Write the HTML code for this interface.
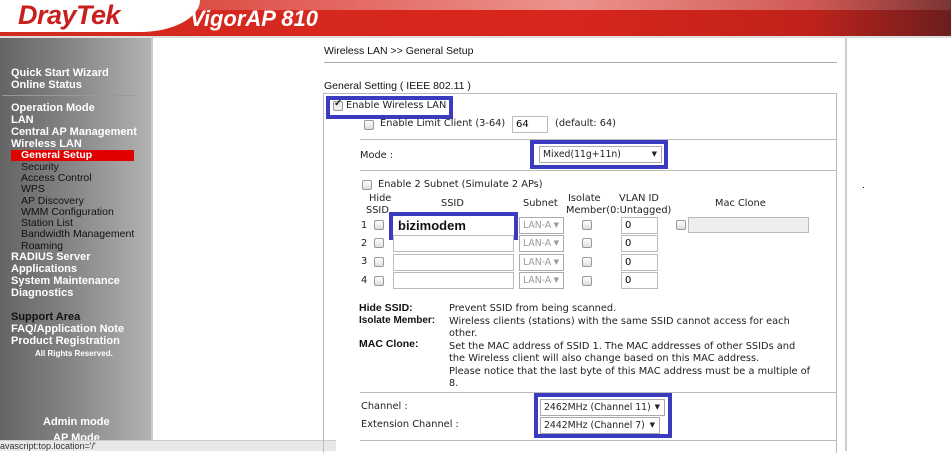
<!DOCTYPE html>
<html><head><style>
*{margin:0;padding:0;box-sizing:border-box}
body{width:951px;height:451px;overflow:hidden;background:#fff;font-family:"Liberation Sans",Arial,sans-serif;position:relative}
.a{position:absolute;white-space:nowrap}
.v{font-family:"DejaVu Sans",Verdana,sans-serif;font-size:9.8px;color:#222}
.m{color:#fff;font-weight:bold;font-size:11px;left:11px}
.s{color:#111;font-size:10.5px;left:21px}
.cb{position:absolute;width:10px;height:10px;border:1px solid #999;border-radius:2px;background:linear-gradient(#fff,#ddd)}
.in{position:absolute;border:1px solid #bbb;background:#fff;height:17px;font-size:10px;padding-left:3px;line-height:15px;font-family:"DejaVu Sans",sans-serif}
.sel{position:absolute;border:1px solid #aaa;background:#fff;height:17px;font-size:9.3px;padding-left:3px;line-height:15px;font-family:"DejaVu Sans",sans-serif;color:#222;overflow:hidden}
.sel:after{content:"▼";position:absolute;right:4px;font-size:7px;top:0;background:#fff}
.blue{position:absolute;border:4px solid #3b3bbf}
.hr{position:absolute;height:1px;background:#bbb}
</style></head><body>
<div class="a" style="left:0;top:0;width:951px;height:36px;background:linear-gradient(90deg,#d42a20 0%,#d8261c 60%,#c0221b 85%,#6b1e1e 100%)"></div>
<div class="a" style="left:0;top:0;width:951px;height:10px;background:linear-gradient(90deg,rgba(255,255,255,0) 0%,rgba(255,255,255,.5) 60%,rgba(255,255,255,.1) 100%)"></div>
<div class="a" style="left:0;top:0;width:200px;height:32px;background:#fff;border-bottom-right-radius:60px 32px"></div>
<div class="a" style="left:18px;top:2px;font-size:27px;line-height:27px;font-weight:bold;font-style:italic;color:#c8201c;letter-spacing:-0.5px">DrayTek</div>
<div class="a" style="left:190px;top:6px;font-size:22px;font-weight:bold;font-style:italic;color:#fff">VigorAP 810</div>
<div class="a" style="left:0;top:36px;width:951px;height:2px;background:#ddd"></div>
<div class="a" style="left:0;top:38px;width:151px;height:413px;background:linear-gradient(90deg,#646464 0%,#888 50%,#b2b2b2 100%)"></div>
<div class="a" style="left:151px;top:38px;width:2px;height:413px;background:#ccc"></div>
<div class="a m" style="top:67px">Quick Start Wizard</div>
<div class="a m" style="top:79px">Online Status</div>
<div class="a" style="left:2px;top:95px;width:132px;height:1px;background:#999"></div>
<div class="a m" style="top:102px">Operation Mode</div>
<div class="a m" style="top:114px">LAN</div>
<div class="a m" style="top:126px">Central AP Management</div>
<div class="a m" style="top:138px">Wireless LAN</div>
<div class="a" style="left:11px;top:150px;width:123px;height:11px;background:#e00000"></div>
<div class="a" style="left:21px;top:149px;font-size:10.5px;color:#fff;font-weight:bold">General Setup</div>
<div class="a s" style="top:161px">Security</div>
<div class="a s" style="top:172px">Access Control</div>
<div class="a s" style="top:183px">WPS</div>
<div class="a s" style="top:195px">AP Discovery</div>
<div class="a s" style="top:206px">WMM Configuration</div>
<div class="a s" style="top:217px">Station List</div>
<div class="a s" style="top:228px">Bandwidth Management</div>
<div class="a s" style="top:240px">Roaming</div>
<div class="a m" style="top:251px">RADIUS Server</div>
<div class="a m" style="top:263px">Applications</div>
<div class="a m" style="top:275px">System Maintenance</div>
<div class="a m" style="top:287px">Diagnostics</div>
<div class="a" style="left:11px;top:311px;font-size:11px;font-weight:bold;color:#111">Support Area</div>
<div class="a m" style="top:323px">FAQ/Application Note</div>
<div class="a m" style="top:335px">Product Registration</div>
<div class="a" style="left:35px;top:349px;font-size:8px;color:#fff;font-weight:bold">All Rights Reserved.</div>
<div class="a" style="left:43px;top:416px;font-size:11px;color:#fff;font-weight:bold">Admin mode</div>
<div class="a" style="left:53px;top:432px;font-size:11px;color:#fff;font-weight:bold">AP Mode</div>
<div class="a" style="left:0;top:440px;width:336px;height:11px;background:#e8e8e8;border-top:1px solid #ccc;font-size:9px;color:#333;line-height:10px">avascript:top.location='/'</div>
<div class="a" style="left:845px;top:38px;width:2px;height:413px;background:#ccc"></div>
<div class="a" style="left:862px;top:180px;font-size:10px">.</div>
<div class="a" style="left:324px;top:45px;font-size:10.5px;color:#111">Wireless LAN &gt;&gt; General Setup</div>
<div class="hr" style="left:324px;top:62px;width:513px;background:#aaa"></div>
<div class="a" style="left:324px;top:80px;font-size:10.5px;color:#111">General Setting ( IEEE 802.11 )</div>
<div class="a" style="left:323px;top:93px;width:514px;height:360px;border:1px solid #bbb;border-bottom:none"></div>
<div class="blue" style="left:326px;top:96px;width:127px;height:23px"></div>
<div class="cb" style="left:333px;top:101px;background:#eee"></div>
<div class="a" style="left:334px;top:98px;font-size:10px;color:#222;font-weight:bold">✓</div>
<div class="a v" style="left:346px;top:100px">Enable Wireless LAN</div>
<div class="cb" style="left:364px;top:120px"></div>
<div class="a v" style="left:380px;top:118px">Enable Limit Client (3-64)</div>
<div class="in" style="left:512px;top:116px;width:36px">64</div>
<div class="a v" style="left:555px;top:118px">(default: 64)</div>
<div class="hr" style="left:360px;top:139px;width:477px"></div>
<div class="a v" style="left:360px;top:150px">Mode :</div>
<div class="blue" style="left:530px;top:140px;width:138px;height:29px"></div>
<div class="sel" style="left:539px;top:146px;width:123px">Mixed(11g+11n)</div>
<div class="hr" style="left:360px;top:170px;width:477px"></div>
<div class="cb" style="left:362px;top:180px"></div>
<div class="a v" style="left:378px;top:179px">Enable 2 Subnet (Simulate 2 APs)</div>
<div class="a v" style="left:369px;top:193px">Hide</div>
<div class="a v" style="left:366px;top:205px">SSID</div>
<div class="a v" style="left:441px;top:198px">SSID</div>
<div class="a v" style="left:523px;top:198px">Subnet</div>
<div class="a v" style="left:568px;top:193px">Isolate</div>
<div class="a v" style="left:566px;top:205px">Member(0:Untagged)</div>
<div class="a v" style="left:619px;top:193px">VLAN ID</div>
<div class="a v" style="left:715px;top:198px">Mac Clone</div>
<div class="blue" style="left:389px;top:212px;width:129px;height:28px"></div>
<div class="a" style="left:398px;top:218px;font-size:13px;font-weight:bold;color:#111">bizimodem</div>
<div class="cb" style="left:676px;top:220px"></div>
<div class="a" style="left:688px;top:217px;width:121px;height:16px;border:1px solid #bbb;background:#eee"></div>
<div class="a v" style="left:361px;top:220px">1</div>
<div class="cb" style="left:374px;top:220px"></div>
<div class="sel" style="left:519px;top:217px;width:45px;color:#999">LAN-A</div>
<div class="cb" style="left:582px;top:220px"></div>
<div class="in" style="left:621px;top:217px;width:37px">0</div>
<div class="a v" style="left:361px;top:238px">2</div>
<div class="cb" style="left:374px;top:238px"></div>
<div class="in" style="left:393px;top:235px;width:121px"></div>
<div class="sel" style="left:519px;top:235px;width:45px;color:#999">LAN-A</div>
<div class="cb" style="left:582px;top:238px"></div>
<div class="in" style="left:621px;top:235px;width:37px">0</div>
<div class="a v" style="left:361px;top:256px">3</div>
<div class="cb" style="left:374px;top:257px"></div>
<div class="in" style="left:393px;top:254px;width:121px"></div>
<div class="sel" style="left:519px;top:254px;width:45px;color:#999">LAN-A</div>
<div class="cb" style="left:582px;top:257px"></div>
<div class="in" style="left:621px;top:254px;width:37px">0</div>
<div class="a v" style="left:361px;top:275px">4</div>
<div class="cb" style="left:374px;top:276px"></div>
<div class="in" style="left:393px;top:272px;width:121px"></div>
<div class="sel" style="left:519px;top:272px;width:45px;color:#999">LAN-A</div>
<div class="cb" style="left:582px;top:276px"></div>
<div class="in" style="left:621px;top:272px;width:37px">0</div>
<div class="a" style="left:359px;top:302px;font-size:10.5px;font-weight:bold;color:#111">Hide SSID:</div>
<div class="a" style="left:359px;top:315px;font-size:10px;font-weight:bold;color:#111">Isolate Member:</div>
<div class="a" style="left:359px;top:338px;font-size:10.5px;font-weight:bold;color:#111">MAC Clone:</div>
<div class="a v" style="left:449px;top:303px;line-height:12.5px;white-space:normal;width:362px">Prevent SSID from being scanned.<br>Wireless clients (stations) with the same SSID cannot access for each other.<br>Set the MAC address of SSID 1. The MAC addresses of other SSIDs and the Wireless client will also change based on this MAC address.<br>Please notice that the last byte of this MAC address must be a multiple of 8.</div>
<div class="hr" style="left:360px;top:392px;width:477px"></div>
<div class="a v" style="left:361px;top:401px">Channel :</div>
<div class="a v" style="left:361px;top:419px">Extension Channel :</div>
<div class="blue" style="left:534px;top:393px;width:138px;height:45px"></div>
<div class="sel" style="left:540px;top:399px;width:125px">2462MHz (Channel 11)</div>
<div class="sel" style="left:540px;top:417px;width:120px">2442MHz (Channel 7)</div>
<div class="hr" style="left:360px;top:440px;width:477px"></div>
</body></html>
